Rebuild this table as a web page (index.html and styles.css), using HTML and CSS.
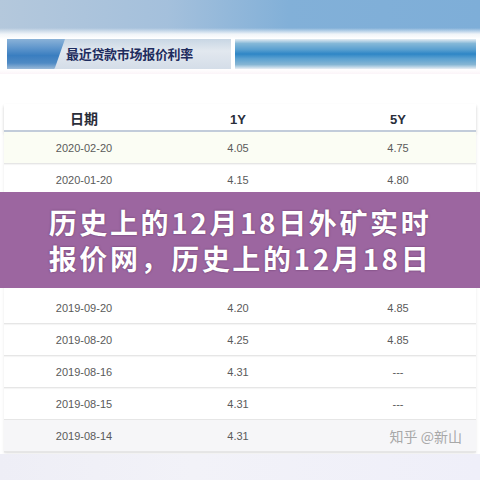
FILE: index.html
```html
<!DOCTYPE html>
<html lang="zh">
<head>
<meta charset="utf-8">
<link rel="stylesheet" href="styles.css">
</head>
<body>
<div class="page">
  <div class="top"></div>
  <div class="band">
    <div class="tag"></div>
    <div class="title">最近贷款市场报价利率</div>
    <div class="rule"></div>
  </div>
  <div class="table">
    <div class="row head"><span>日期</span><span>1Y</span><span>5Y</span></div>
    <div class="row tint"><span>2020-02-20</span><span>4.05</span><span>4.75</span></div>
    <div class="row"><span>2020-01-20</span><span>4.15</span><span>4.80</span></div>
    <div class="row hidden"><span>2019-12-20</span><span>4.15</span><span>4.80</span></div>
    <div class="row hidden"><span>2019-11-20</span><span>4.15</span><span>4.80</span></div>
    <div class="row hidden"><span>2019-10-21</span><span>4.20</span><span>4.85</span></div>
    <div class="row"><span>2019-09-20</span><span>4.20</span><span>4.85</span></div>
    <div class="row"><span>2019-08-20</span><span>4.25</span><span>4.85</span></div>
    <div class="row"><span>2019-08-16</span><span>4.31</span><span>---</span></div>
    <div class="row"><span>2019-08-15</span><span>4.31</span><span>---</span></div>
    <div class="row grey"><span>2019-08-14</span><span>4.31</span><span class="mark">知乎 @新山</span></div>
  </div>
  <div class="foot"></div>
  <div class="banner">
    <p>历史上的12月18日外矿实时</p>
    <p>报价网，历史上的12月18日</p>
  </div>
</div>
</body>
</html>
```
FILE: styles.css
```css
html, body { margin: 0; padding: 0; }
body { background: #fff; font-family: "Liberation Sans", "Noto Sans CJK SC", sans-serif; }
.page { position: relative; width: 480px; height: 480px; overflow: hidden; background: #fff; display: flex; flex-direction: column; }
.top { height: 34px; background: linear-gradient(90deg, #b4c8dc 0%, #a4c0dc 35%, #82b0d8 60%, #7eaed8 100%); position: relative; }
.top::after { content: ""; position: absolute; left: 0; right: 0; bottom: 0; height: 6px; background: linear-gradient(180deg, rgba(200,215,230,0) 0%, #eef3f8 100%); }
.band { height: 40px; display: flex; align-items: center; padding: 0 4px 0 7px; background: linear-gradient(180deg, #f0f4f8 0%, #fff 12%, #fff 88%, #fbf4f8 100%); }
.tag { width: 58px; height: 30px; background: linear-gradient(180deg, #8ab2d8 0%, #5f96cc 30%, #3a7ec0 55%, #4f8ac4 80%, #9ab9d8 100%); clip-path: polygon(0 0, 100% 0, 82% 100%, 0 100%); }
.title { margin-left: -10px; padding-left: 11px; width: 165px; height: 30px; line-height: 30px; font-size: 13px; font-weight: bold; color: #1e2c5e; background: linear-gradient(180deg, #c8d6e4 0%, #e2e8ef 40%, #d4dde8 100%); font-family: "Noto Sans CJK SC", sans-serif; letter-spacing: -0.3px; }
.rule { flex: 1; height: 30px; background: linear-gradient(180deg, #e4ecf2 0%, #84b8d8 15%, #5aa0d0 35%, #2e86c6 50%, #5aa0d0 65%, #86b6d4 85%, #e8eef4 100%); margin-left: 4px; }
.table { margin: 30px 4px 0 4px; display: flex; flex-direction: column; box-shadow: 0 2px 3px rgba(0,0,0,0.08); }
.row { height: 31px; display: grid; grid-template-columns: 160px 148px 1fr; align-items: center; font-size: 11px; color: #5a5a5a; border-bottom: 1px solid #e6e6e6; box-shadow: 0 1px 1px rgba(0,0,0,0.04); }
.row span { text-align: center; }
.row span:nth-child(3) { padding-left: 8px; }
.row.head { height: 26px; font-size: 13px; font-weight: bold; color: #2a2e3a; border-bottom: 2px solid #c2ccda; box-shadow: 0 2px 3px rgba(0,0,0,0.12); align-items: end; padding-bottom: 3px; box-sizing: border-box; height: 28px; }
.row.head span:first-child { font-family: "Noto Sans CJK SC", sans-serif; font-size: 14px; line-height: 18px; }
.row.hidden { visibility: hidden; }
.row.tint { background: #fbfdf4; }
.row.grey { background: #f6f6f8; }
.mark { color: #a8a8a8; font-size: 14px; text-align: right !important; padding-left: 0 !important; padding-right: 14px; font-family: "Noto Sans CJK SC", sans-serif; }
.foot { flex: 1; background: linear-gradient(90deg, #eeeef6 0%, #f2f2f8 40%, #efeff9 100%); margin-top: 2px; }
.banner { position: absolute; left: 0; right: 0; top: 192px; height: 96px; background: rgb(156,102,160); display: flex; flex-direction: column; justify-content: center; align-items: center; }
.banner p { margin: 0; color: #fff; font-family: "Noto Sans CJK SC", sans-serif; font-weight: bold; font-size: 28px; line-height: 36px; letter-spacing: 2.6px; text-shadow: 0 0 2px rgba(60,20,60,0.6); white-space: nowrap; }
```
